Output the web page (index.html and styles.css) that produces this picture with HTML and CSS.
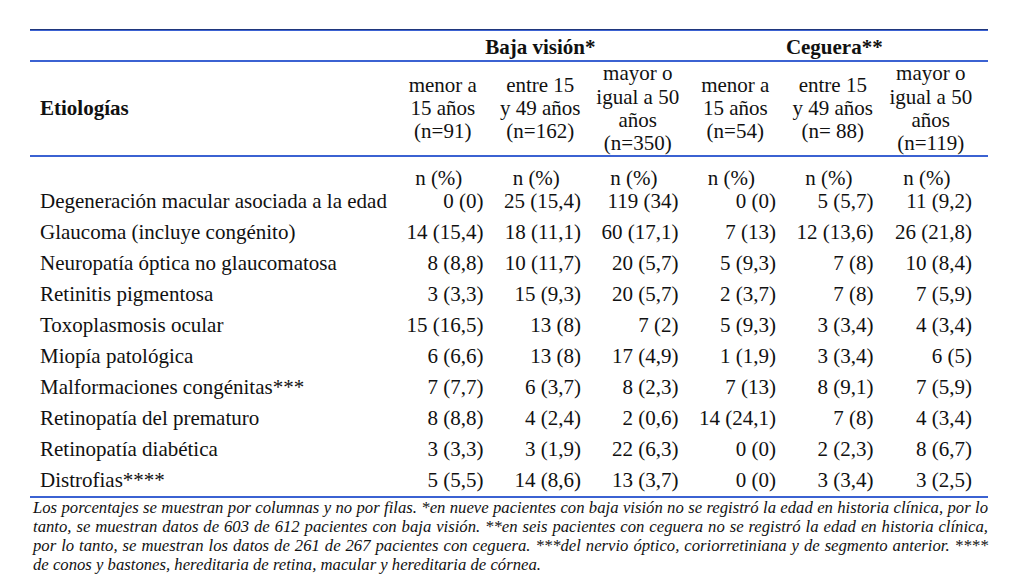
FILE: index.html
```html
<!DOCTYPE html>
<html lang="es">
<head>
    <meta charset="UTF-8">
    <meta name="viewport" content="width=device-width, initial-scale=1.0">
    <title>Etiologías de baja visión y ceguera</title>
    <link rel="stylesheet" href="styles.css">
</head>
<body>
    <section class="sheet">
        <div class="table_wrap">
            <table class="etio">
                <colgroup>
                    <col class="c_label">
                    <col class="c_num"><col class="c_num"><col class="c_num">
                    <col class="c_num"><col class="c_num"><col class="c_last">
                </colgroup>
                <thead>
                    <tr class="groups">
                        <th></th>
                        <th colspan="3">Baja visión*</th>
                        <th colspan="3" class="last">Ceguera**</th>
                    </tr>
                    <tr class="ages">
                        <th class="label">Etiologías</th>
                        <th>menor a<br>15 años<br>(n=91)</th>
                        <th>entre 15<br>y 49 años<br>(n=162)</th>
                        <th>mayor o<br>igual a 50<br>años<br>(n=350)</th>
                        <th>menor a<br>15 años<br>(n=54)</th>
                        <th>entre 15<br>y 49 años<br>(n= 88)</th>
                        <th class="last">mayor o<br>igual a 50<br>años<br>(n=119)</th>
                    </tr>
                </thead>
                <tbody>
                    <tr class="units">
                        <td></td>
                        <td>n (%)</td><td>n (%)</td><td>n (%)</td>
                        <td>n (%)</td><td>n (%)</td><td class="last">n (%)</td>
                    </tr>
                    <tr>
                        <td>Degeneración macular asociada a la edad</td>
                        <td>0 (0)</td><td>25 (15,4)</td><td>119 (34)</td>
                        <td>0 (0)</td><td>5 (5,7)</td><td>11 (9,2)</td>
                    </tr>
                    <tr>
                        <td>Glaucoma (incluye congénito)</td>
                        <td>14 (15,4)</td><td>18 (11,1)</td><td>60 (17,1)</td>
                        <td>7 (13)</td><td>12 (13,6)</td><td>26 (21,8)</td>
                    </tr>
                    <tr>
                        <td>Neuropatía óptica no glaucomatosa</td>
                        <td>8 (8,8)</td><td>10 (11,7)</td><td>20 (5,7)</td>
                        <td>5 (9,3)</td><td>7 (8)</td><td>10 (8,4)</td>
                    </tr>
                    <tr>
                        <td>Retinitis pigmentosa</td>
                        <td>3 (3,3)</td><td>15 (9,3)</td><td>20 (5,7)</td>
                        <td>2 (3,7)</td><td>7 (8)</td><td>7 (5,9)</td>
                    </tr>
                    <tr>
                        <td>Toxoplasmosis ocular</td>
                        <td>15 (16,5)</td><td>13 (8)</td><td>7 (2)</td>
                        <td>5 (9,3)</td><td>3 (3,4)</td><td>4 (3,4)</td>
                    </tr>
                    <tr>
                        <td>Miopía patológica</td>
                        <td>6 (6,6)</td><td>13 (8)</td><td>17 (4,9)</td>
                        <td>1 (1,9)</td><td>3 (3,4)</td><td>6 (5)</td>
                    </tr>
                    <tr>
                        <td>Malformaciones congénitas***</td>
                        <td>7 (7,7)</td><td>6 (3,7)</td><td>8 (2,3)</td>
                        <td>7 (13)</td><td>8 (9,1)</td><td>7 (5,9)</td>
                    </tr>
                    <tr>
                        <td>Retinopatía del prematuro</td>
                        <td>8 (8,8)</td><td>4 (2,4)</td><td>2 (0,6)</td>
                        <td>14 (24,1)</td><td>7 (8)</td><td>4 (3,4)</td>
                    </tr>
                    <tr>
                        <td>Retinopatía diabética</td>
                        <td>3 (3,3)</td><td>3 (1,9)</td><td>22 (6,3)</td>
                        <td>0 (0)</td><td>2 (2,3)</td><td>8 (6,7)</td>
                    </tr>
                    <tr>
                        <td>Distrofias****</td>
                        <td>5 (5,5)</td><td>14 (8,6)</td><td>13 (3,7)</td>
                        <td>0 (0)</td><td>3 (3,4)</td><td>3 (2,5)</td>
                    </tr>
                </tbody>
            </table>
        </div>
        <p class="note">
            <span class="ln">Los porcentajes se muestran por columnas y no por filas. *en nueve pacientes con baja visión no se registró la edad en historia clínica, por lo</span>
            <span class="ln">tanto, se muestran datos de 603 de 612 pacientes con baja visión. **en seis pacientes con ceguera no se registró la edad en historia clínica,</span>
            <span class="ln">por lo tanto, se muestran los datos de 261 de 267 pacientes con ceguera. ***del nervio óptico, coriorretiniana y de segmento anterior. ****</span>
            <span class="ln end">de conos y bastones, hereditaria de retina, macular y hereditaria de córnea.</span>
        </p>
    </section>
</body>
</html>
```

FILE: styles.css
```css
body,html{margin: 0; padding: 0; background: #fff;}
body{
    font-family: "Liberation Serif", "Times New Roman", serif; font-size: 21px; color: #111;
}
.sheet{padding: 29px 0 0 30px;}

.table_wrap{width: 958px; border-top: 1px solid #1f367c;}
.etio{
    width: 958px; border-collapse: collapse; table-layout: fixed;
    border-top: 1px solid #3b62d2; border-bottom: 2px solid #3b62d2;
}
.etio .c_label{width: 364px;}
.etio .c_num{width: 97.5px;}
.etio .c_last{width: 106.5px;}

.etio th{padding: 0; font-weight: normal; text-align: center; line-height: 23.25px;}
.etio .groups th{font-weight: bold; padding: 5px 0 1px; border-bottom: 2px solid #3b62d2;}
.etio .groups th.last{padding-right: 6px;}
.etio .ages th{border-bottom: 2px solid #3b62d2; vertical-align: middle;}
.etio .ages th.last{padding-right: 8px;}
.etio .ages th.label{font-weight: bold; text-align: left; padding-left: 10px;}

.etio td{padding: 0 8px 0 0; line-height: 31px; text-align: right; white-space: nowrap;}
.etio td:first-child{padding-left: 10px; text-align: left;}
.etio td:last-child{padding-right: 16px;}
.etio .units td{padding: 15px 8px 2px 0; line-height: 12px; text-align: center;}
.etio .units td.last{padding-right: 16px;}

.note{
    width: 955px; margin: 0 0 0 3px; padding: 0;
    font-style: italic; font-size: 16.7px; line-height: 19px; color: #111;
}
.note>.ln{display: block; white-space: nowrap; text-align: justify; text-align-last: justify;}
.note>.ln.end{text-align-last: left;}
```
